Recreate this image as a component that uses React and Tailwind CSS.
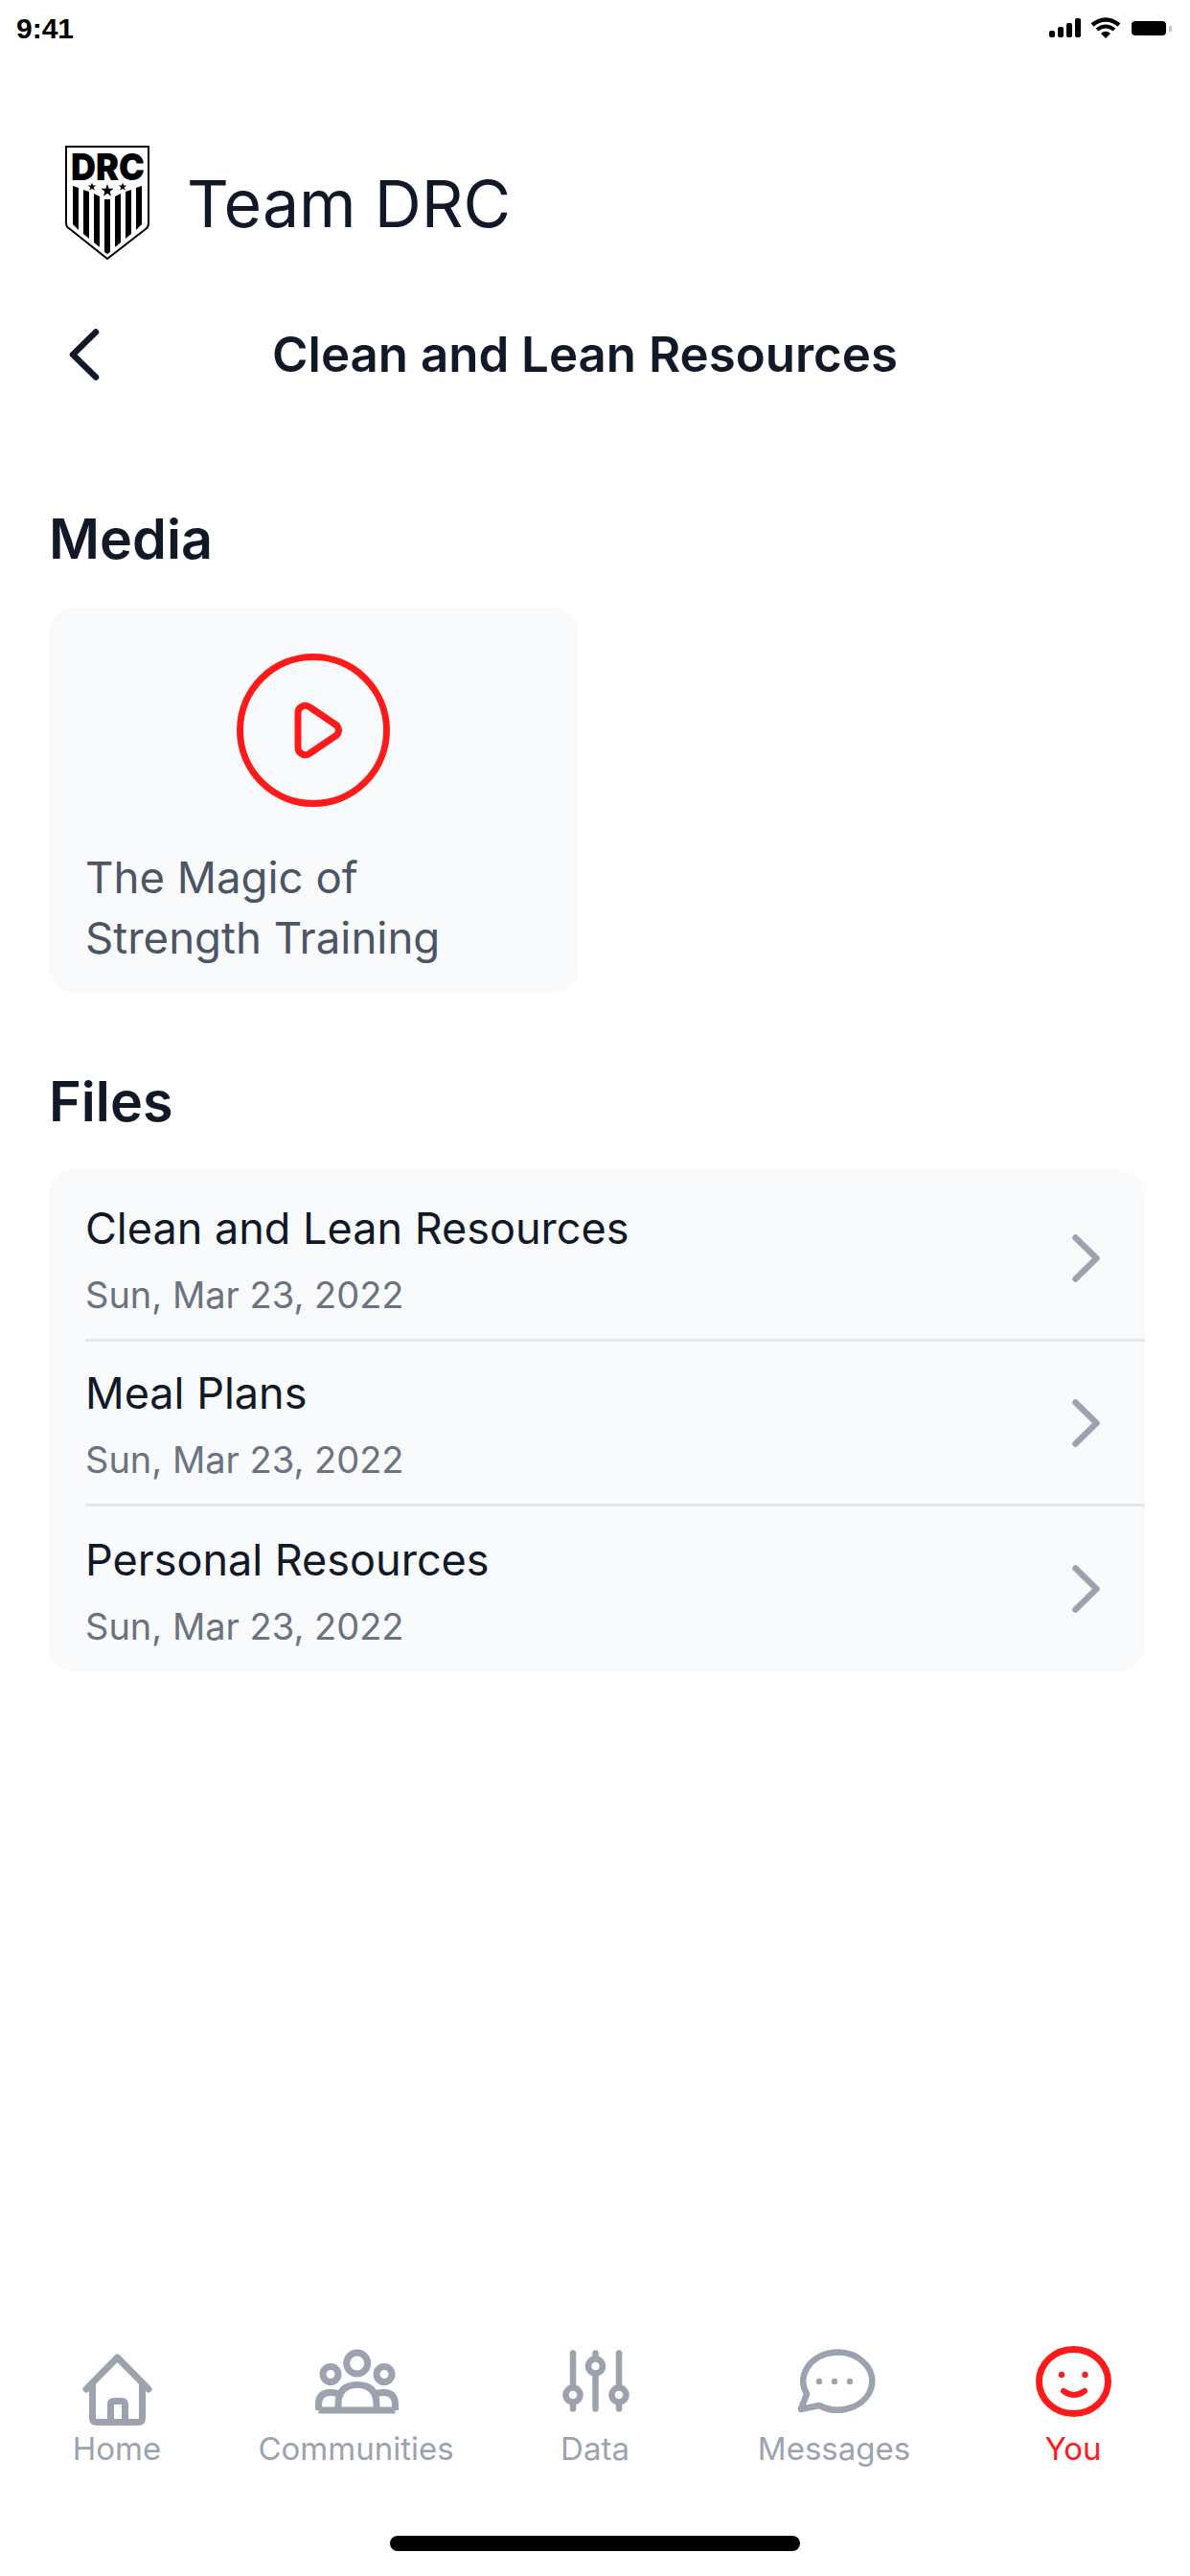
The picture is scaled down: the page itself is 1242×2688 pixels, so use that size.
import React from 'react';

const FILES = [
  { name: 'Clean and Lean Resources', date: 'Sun, Mar 23, 2022' },
  { name: 'Meal Plans', date: 'Sun, Mar 23, 2022' },
  { name: 'Personal Resources', date: 'Sun, Mar 23, 2022' },
];

function StatusBar() {
  return (
    <div className="flex h-[60px] items-start justify-between pl-[17px] pr-[17px] pt-[13px]">
      <span className="font-['Liberation_Sans',sans-serif] text-[30px] leading-[34px] font-bold text-black">9:41</span>
      <svg width="130" height="24" viewBox="0 0 130 24" className="mt-[5px]">
        <rect x="0" y="14" width="6" height="7" rx="2" fill="#000" />
        <rect x="9" y="10" width="6" height="11" rx="2" fill="#000" />
        <rect x="18" y="6" width="6" height="15" rx="2" fill="#000" />
        <rect x="27" y="1" width="6" height="20" rx="2" fill="#000" />
        <path d="M45 8 Q59 -3 73 8" fill="none" stroke="#000" strokeWidth="4.5" />
        <path d="M50 13 Q59 6 68 13" fill="none" stroke="#000" strokeWidth="4" />
        <path d="M54 17 L59 22 L64 17 Q59 12.5 54 17 Z" fill="#000" />
        <rect x="86" y="4" width="36" height="15" rx="4" fill="#000" />
        <rect x="125" y="9" width="3" height="6" rx="1" fill="#c4c4c4" />
      </svg>
    </div>
  );
}

function Star({ x, y, r }) {
  const pts = [];
  for (let i = 0; i < 10; i++) {
    const a = -Math.PI / 2 + (i * Math.PI) / 5;
    const rad = i % 2 === 0 ? r : r * 0.4;
    pts.push(`${(x + rad * Math.cos(a)).toFixed(2)},${(y + rad * Math.sin(a)).toFixed(2)}`);
  }
  return <polygon points={pts.join(' ')} fill="#000" />;
}

function Logo() {
  const stripes = [
    'M8 42 L14 44 L14 88 L8 82 Z',
    'M19 46 L25 48 L25 97 L19 92 Z',
    'M30 50 L36 53 L36 106 L30 101 Z',
    'M41 56 L47 56 L47 111 L44 113 L41 111 Z',
    'M52 53 L58 50 L58 101 L52 106 Z',
    'M63 48 L69 46 L69 92 L63 97 Z',
    'M74 44 L80 42 L80 82 L74 88 Z',
  ];
  return (
    <svg width="89" height="120" viewBox="0 0 89 120" className="overflow-visible">
      <path d="M1 1 H87 V81 Q87 85 84 87 L44 118 L5 87 Q1 85 1 81 Z" fill="#fff" stroke="#000" strokeWidth="2" />
      <text x="44.5" y="36" textAnchor="middle" textLength="77" lengthAdjust="spacingAndGlyphs" fontFamily="Inter, sans-serif" fontWeight="900" fontSize="39" fill="#000">DRC</text>
      <Star x={28} y={43} r={4.5} />
      <Star x={44} y={47} r={7} />
      <Star x={60} y={43} r={4.5} />
      {stripes.map((d) => <path key={d} d={d} fill="#000" />)}
    </svg>
  );
}

function HomeIcon() {
  return (
    <svg width="100" height="88" viewBox="0 0 100 88" fill="none" stroke="#9ca3af" strokeWidth="7" strokeLinecap="round" strokeLinejoin="round">
      <path d="M18 50 L50.5 17 L83 50" />
      <path d="M24.5 44 V80 Q24.5 84.5 29 84.5 H72 Q76.5 84.5 76.5 80 V44" />
      <path d="M43.5 84.5 V66 Q43.5 62.5 47 62.5 H55 Q58.5 62.5 58.5 66 V84.5" />
    </svg>
  );
}

function CommunitiesIcon() {
  return (
    <svg width="100" height="88" viewBox="0 0 100 88" fill="none" stroke="#9ca3af" strokeWidth="7" strokeLinejoin="round">
      <circle cx="50.7" cy="23" r="11" />
      <circle cx="23" cy="34.5" r="8" />
      <circle cx="79" cy="34.5" r="8" />
      <path d="M10.5 72 V66 Q10.5 53.5 23 53.5 Q29 53.5 33 56" />
      <path d="M90.5 72 V66 Q90.5 53.5 78 53.5 Q72 53.5 69 56" />
      <path d="M31 72 V66 Q31 45.5 51 45.5 Q71 45.5 71 66 V72" />
      <path d="M10.5 72 H90.5" />
    </svg>
  );
}

function DataIcon() {
  return (
    <svg width="100" height="88" viewBox="0 0 100 88" fill="none" stroke="#9ca3af" strokeWidth="6.5" strokeLinecap="round">
      <path d="M27 12.5 V48 M27 64 V70.5 M50.5 12.5 V18 M50.5 34 V70.5 M75 12.5 V48 M75 64 V70.5" />
      <circle cx="27" cy="56" r="7.5" />
      <circle cx="50.5" cy="26" r="7.5" />
      <circle cx="75" cy="56" r="7.5" />
    </svg>
  );
}

function MessagesIcon() {
  return (
    <svg width="100" height="88" viewBox="0 0 100 88" fill="none">
      <path d="M21 55 A36 30 0 1 1 34 67 L15 71 Z" stroke="#9ca3af" strokeWidth="6.5" strokeLinejoin="round" />
      <circle cx="34" cy="42" r="3.2" fill="#9ca3af" />
      <circle cx="50" cy="42" r="3.2" fill="#9ca3af" />
      <circle cx="66" cy="42" r="3.2" fill="#9ca3af" />
    </svg>
  );
}

function YouIcon() {
  return (
    <svg width="100" height="88" viewBox="0 0 100 88" fill="none" stroke="#ff1a1a">
      <ellipse cx="50.5" cy="42" rx="36" ry="33.5" strokeWidth="7" />
      <circle cx="38" cy="35" r="3.2" fill="#ff1a1a" stroke="none" />
      <circle cx="62.5" cy="35" r="3.2" fill="#ff1a1a" stroke="none" />
      <path d="M40 52 Q51 60 62 52" strokeWidth="6" strokeLinecap="round" />
    </svg>
  );
}

const NAV = [
  { label: 'Home', Icon: HomeIcon },
  { label: 'Communities', Icon: CommunitiesIcon },
  { label: 'Data', Icon: DataIcon },
  { label: 'Messages', Icon: MessagesIcon },
  { label: 'You', Icon: YouIcon, active: true },
];

export default function App() {
  return (
    <div className="flex h-[2688px] w-[1242px] flex-col overflow-hidden bg-white font-['Inter',sans-serif]">
      <StatusBar />

      <div className="mt-[92px] flex items-center pl-[68px]">
        <Logo />
        <h1 className="ml-[38px] text-[68px] leading-[80px] font-normal text-[#111827]">Team DRC</h1>
      </div>

      <div className="mt-[63px] flex h-[70px] items-center pl-[72px]">
        <svg width="32" height="54" viewBox="0 0 32 54" fill="none" stroke="#111827" strokeWidth="6.5" strokeLinecap="round" strokeLinejoin="round">
          <path d="M28 3.5 L4 27 L28 50.5" />
        </svg>
        <h2 className="ml-[180px] text-[51px] leading-[70px] font-semibold text-[#111827]">Clean and Lean Resources</h2>
      </div>

      <div className="mt-[122px] px-[51px]">
        <h3 className="text-[57.5px] leading-[70px] font-semibold text-[#111827]">Media</h3>
        <div className="mt-[37px] flex h-[402px] w-[552px] flex-col items-center rounded-[26px] bg-[#f9fafb] pt-[48px]">
          <svg width="160" height="160" viewBox="0 0 160 160" fill="none" stroke="#ff1a1a" strokeWidth="7">
            <circle cx="80" cy="80" r="76.5" />
            <path d="M64 62 Q64 57 68.5 55 Q72.500 53 76.500 56 L104.500 75 Q108.500 80 104.500 85 L76.500 104 Q72.500 107 68.500 105 Q64 103 64 98 Z" strokeLinejoin="round" />
          </svg>
          <p className="mt-[42px] w-full pl-[38px] text-[45.6px] leading-[63px] text-[#4b5563]">The Magic of<br />Strength Training</p>
        </div>

        <h3 className="mt-[78px] text-[57.5px] leading-[70px] font-semibold text-[#111827]">Files</h3>
        <div className="mt-[36px] w-[1144px] rounded-[26px] bg-[#f9fafb] pt-[8px]">
          {FILES.map((file, i) => (
            <div key={file.name} className={`ml-[38px] flex h-[172px] items-center justify-between pr-[47px] ${i < FILES.length - 1 ? 'border-b-[3px] border-[#e5e7eb]' : ''}`}>
              <div className="pt-[3px]">
                <p className="text-[45px] leading-[60px] text-[#111827]">{file.name}</p>
                <p className="mt-[14px] text-[38px] leading-[50px] text-[#6b7280]">{file.date}</p>
              </div>
              <svg width="29" height="50" viewBox="0 0 29 50" fill="none" stroke="#9ca3af" strokeWidth="6.5" strokeLinecap="round" strokeLinejoin="round">
                <path d="M3.5 3.5 L25.5 25 L3.5 46.5" />
              </svg>
            </div>
          ))}
        </div>
      </div>

      <div className="flex-1" />

      <nav className="flex justify-between px-[22px]">
        {NAV.map(({ label, Icon, active }) => (
          <div key={label} className="flex w-[200px] flex-col items-center">
            <Icon />
            <span className={`mt-[4px] text-[33px] leading-[40px] ${active ? 'text-[#ff1a1a]' : 'text-[#9ca3af]'}`}>{label}</span>
          </div>
        ))}
      </nav>

      <div className="mb-[26px] mt-[71px] flex justify-center">
        <div className="h-[16px] w-[428px] rounded-full bg-black" />
      </div>
    </div>
  );
}
